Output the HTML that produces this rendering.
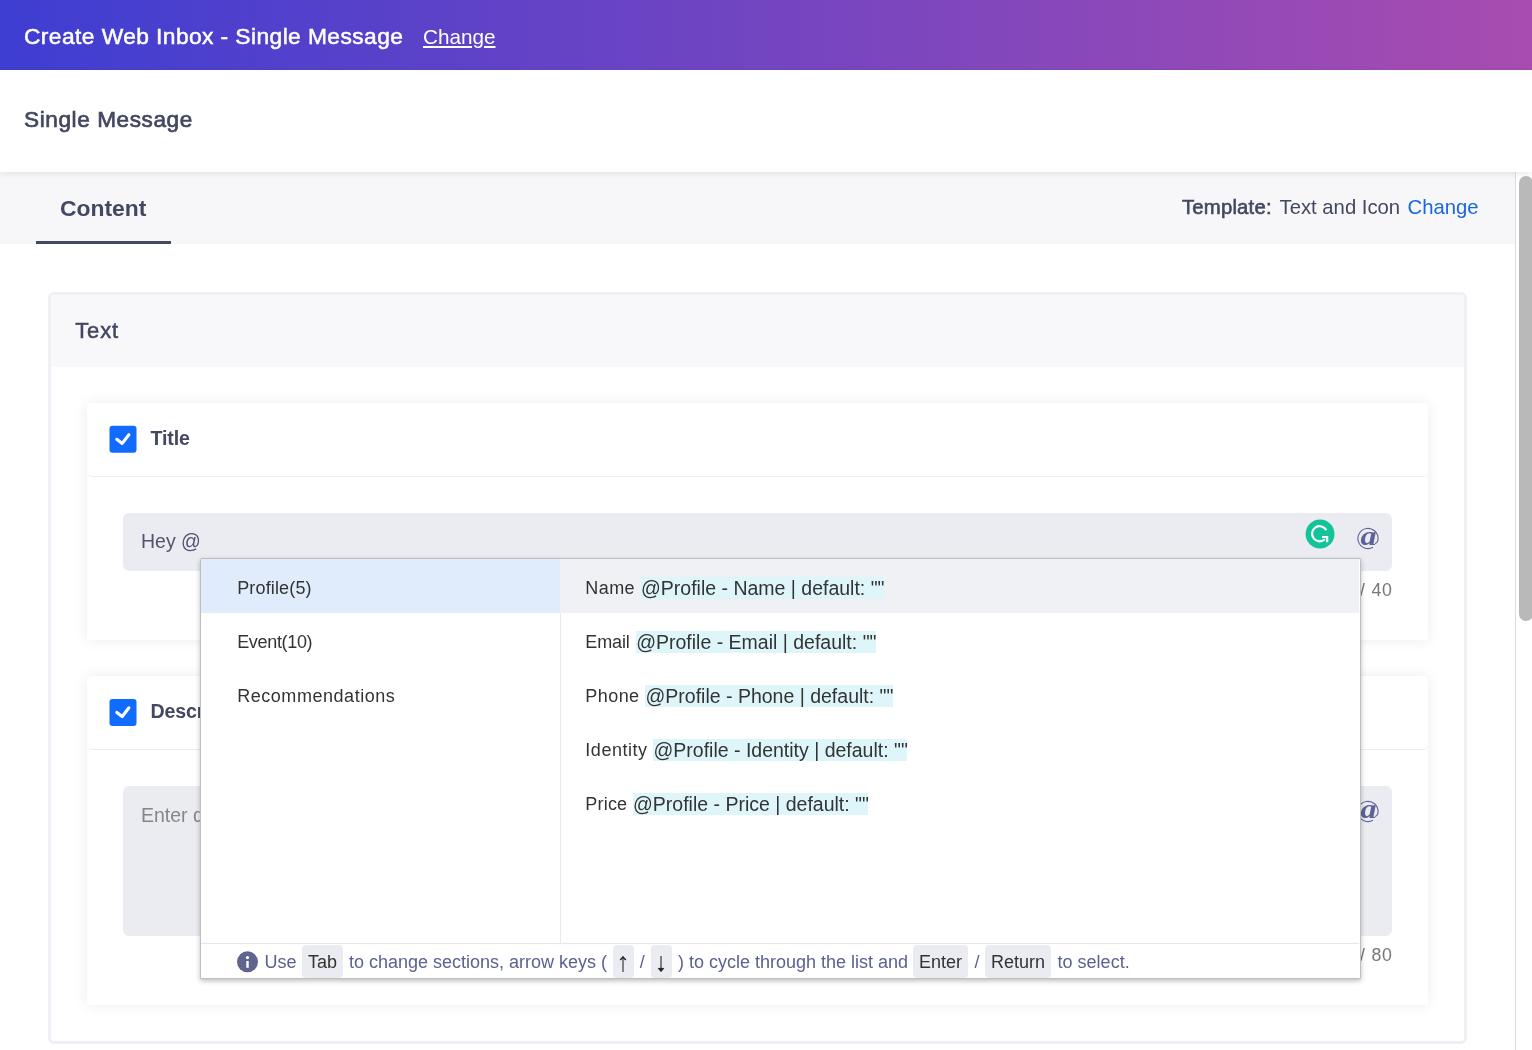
<!DOCTYPE html>
<html>
<head>
<meta charset="utf-8">
<style>
*{box-sizing:border-box;margin:0;padding:0}
html,body{width:1532px;height:1050px;overflow:hidden;background:#fff}
body{font-family:"Liberation Sans",sans-serif;color:#434761;position:relative}
.abs{position:absolute}
.t{position:absolute;white-space:nowrap;line-height:1}
.med{-webkit-text-stroke:0.5px currentColor}
#hdr{left:0;top:0;width:1532px;height:70px;background:linear-gradient(90deg,#3e3ed2 0%,#a84cb0 100%)}
#sub{left:0;top:70px;width:1532px;height:102px;background:#fff;box-shadow:0 2px 6px rgba(0,0,0,0.085);z-index:3}
#tabs{left:0;top:172px;width:1515px;height:72px;background:#f7f7fa}
#tabline{left:36px;top:241px;width:135px;height:3px;background:#434761}
#sbline{left:1515px;top:172px;width:1px;height:878px;background:#dcdcdc}
#sbthumb{left:1519px;top:176px;width:14px;height:445px;background:#b9b9b9;border-radius:7px}
#card{left:48px;top:292px;width:1419px;height:752px;border:3px solid #eff0f5;border-radius:6px;background:#fff}
#cardhdr{left:51px;top:295px;width:1413px;height:72px;background:#f8f8fa}
.sec{background:#fff;box-shadow:0 0 14px rgba(40,40,80,0.085);border-radius:5px 5px 0 0}
.sechdr{background:#fff;border-bottom:1px solid #ececf2;border-radius:5px}
.cb{width:27px;height:27px;background:#126bff;border-radius:3px}
.inp{background:#ebecf2;border-radius:6px}
#dd{left:200px;top:558px;width:1161px;height:421px;background:#fff;border:1px solid #bebebe;border-radius:2px 2px 0 0;box-shadow:0 2px 5px rgba(0,0,0,0.26);z-index:10}
.hl{background:#def6fa}
.key{position:absolute;background:#ebecf2;border-radius:4px;height:35px;top:0}
</style>
</head>
<body>
<div id="root" style="position:absolute;left:0;top:0;width:1532px;height:1050px;will-change:transform;overflow:hidden">
<div class="abs" id="hdr"></div>
<div class="abs" id="sub"></div>
<div class="t med" style="left:24px;top:25.2px;font-size:22.8px;letter-spacing:.41px;color:#fff;z-index:4">Create Web Inbox - Single Message</div>
<div class="t" style="left:423px;top:27px;font-size:20.7px;color:#fff;text-decoration:underline;z-index:4">Change</div>
<div class="t med" style="left:24px;top:109.4px;font-size:22.6px;letter-spacing:.58px;-webkit-text-stroke-width:.7px;color:#434761;z-index:4">Single Message</div>

<div class="abs" id="tabs"></div>
<div class="abs" id="tabline"></div>
<div class="t" style="left:60px;top:197px;font-size:22.9px;font-weight:bold;color:#434761">Content</div>
<div class="t med" style="left:1182px;top:197px;font-size:20.3px;color:#434761;-webkit-text-stroke-width:.6px;letter-spacing:.2px">Template:</div>
<div class="t" style="left:1279.5px;top:197px;font-size:20.3px;color:#434761">Text and Icon</div>
<div class="t" style="left:1407.5px;top:197px;font-size:20.3px;color:#1a66e0">Change</div>
<div class="abs" id="sbline"></div>
<div class="abs" id="sbthumb"></div>

<div class="abs" id="card"></div>
<div class="abs" id="cardhdr"></div>
<div class="t med" style="left:75.3px;top:320.3px;font-size:22px;letter-spacing:.8px">Text</div>

<!-- Title section -->
<div class="abs sec" style="left:87px;top:403px;width:1341px;height:237px"></div>
<div class="abs sechdr" style="left:87px;top:403px;width:1341px;height:74px"></div>
<div class="abs cb" style="left:109px;top:425px;transform:translate(.5px,.8px);height:27.4px"><svg width="27" height="27" viewBox="0 0 27 27"><path d="M7.3 13.5 L12.7 17.6 L19.4 8.9" fill="none" stroke="#fff" stroke-width="3.1" stroke-linecap="round" stroke-linejoin="round"/></svg></div>
<div class="t" style="left:150.4px;top:428.8px;font-size:19.6px;font-weight:bold;letter-spacing:-.1px">Title</div>
<div class="abs inp" style="left:123px;top:513px;width:1269px;height:58px"></div>
<div class="t" style="left:141px;top:532px;font-size:19.5px;color:#50546f">Hey @</div>
<div class="abs" style="left:1305px;top:519px;width:30px;height:30px"><svg width="30" height="30" viewBox="0 0 30 30"><circle cx="15.05" cy="15" r="14.45" fill="#15c39a"/><path d="M21.4 11.2 A7.6 7.6 0 1 0 19.9 20.3" fill="none" stroke="#fff" stroke-width="2.1"/><path d="M17 18 H22.2 V23.2" fill="none" stroke="#fff" stroke-width="2.1"/></svg></div>
<div class="abs" style="left:1356px;top:526.5px;width:26px;height:26px"><svg width="26" height="26" viewBox="0 0 26 26"><text transform="translate(4.4 17.9) scale(1.17 1)" font-family="Liberation Serif" font-style="italic" font-weight="bold" font-size="27.5" fill="#5e6397">a</text><path d="M19 16.6 C21 15.8 22.1 13.6 22.1 11.5 A10.1 10.1 0 1 0 17 20.27" fill="none" stroke="#5e6397" stroke-width="1.1"/></svg></div>
<div class="t" style="right:139.2px;top:582px;font-size:17.8px;letter-spacing:.8px;color:#777">0 / 40</div>

<!-- Description section -->
<div class="abs sec" style="left:87px;top:676px;width:1341px;height:329px"></div>
<div class="abs sechdr" style="left:87px;top:676px;width:1341px;height:74px"></div>
<div class="abs cb" style="left:109px;top:698px;transform:translate(.5px,.9px);height:27.4px"><svg width="27" height="27" viewBox="0 0 27 27"><path d="M7.3 13.5 L12.7 17.6 L19.4 8.9" fill="none" stroke="#fff" stroke-width="3.1" stroke-linecap="round" stroke-linejoin="round"/></svg></div>
<div class="t" style="left:150.4px;top:701.8px;font-size:19.6px;font-weight:bold;letter-spacing:-.1px">Description</div>
<div class="abs inp" style="left:123px;top:786px;width:1269px;height:150px"></div>
<div class="t" style="left:141px;top:805.5px;font-size:19.5px;color:#868686">Enter description</div>
<div class="abs" style="left:1356px;top:799.5px;width:26px;height:26px"><svg width="26" height="26" viewBox="0 0 26 26"><text transform="translate(4.4 17.9) scale(1.17 1)" font-family="Liberation Serif" font-style="italic" font-weight="bold" font-size="27.5" fill="#5e6397">a</text><path d="M19 16.6 C21 15.8 22.1 13.6 22.1 11.5 A10.1 10.1 0 1 0 17 20.27" fill="none" stroke="#5e6397" stroke-width="1.1"/></svg></div>
<div class="t" style="right:139.2px;top:947px;font-size:17.8px;letter-spacing:.8px;color:#777">0 / 80</div>

<!-- Dropdown -->
<div class="abs" id="dd">
  <div class="abs" style="left:0;top:0;width:359px;height:54px;background:#e0ecfc"></div>
  <div class="abs" style="left:359px;top:0;width:799px;height:54px;background:#f0f1f5"></div>
  <div class="abs" style="left:359px;top:54px;width:1px;height:330px;background:#e8e8f0"></div>
  <div class="abs" style="left:0;top:384px;width:1158px;height:1px;background:#e6e6ec"></div>
  <div class="t" style="left:36.2px;top:20.0px;font-size:18.0px;color:#333;letter-spacing:0.15px;">Profile(5)</div>
  <div class="t" style="left:36.2px;top:74.0px;font-size:18.0px;color:#333;letter-spacing:-0.33px;">Event(10)</div>
  <div class="t" style="left:36.2px;top:128.0px;font-size:18.0px;color:#333;letter-spacing:0.54px;">Recommendations</div>
  <div class="t" style="left:384.3px;top:20.0px;font-size:18.0px;color:#333;letter-spacing:0.43px;">Name</div>
  <div class="t hl" style="left:440px;top:18px;width:243px;font-size:19.5px;line-height:22px;height:22px;color:#333;text-indent:0.0px">@Profile - Name | default: ""</div>
  <div class="t" style="left:384.3px;top:74.0px;font-size:18.0px;color:#333;letter-spacing:-0.13px;">Email</div>
  <div class="t hl" style="left:435px;top:72px;width:240px;font-size:19.5px;line-height:22px;height:22px;color:#333;text-indent:0.2px">@Profile - Email | default: ""</div>
  <div class="t" style="left:384.3px;top:128.0px;font-size:18.0px;color:#333;letter-spacing:0.44px;">Phone</div>
  <div class="t hl" style="left:444px;top:126px;width:248px;font-size:19.5px;line-height:22px;height:22px;color:#333;text-indent:0.5px">@Profile - Phone | default: ""</div>
  <div class="t" style="left:384.3px;top:182.0px;font-size:18.0px;color:#333;letter-spacing:0.54px;">Identity</div>
  <div class="t hl" style="left:452px;top:180px;width:254px;font-size:19.5px;line-height:22px;height:22px;color:#333;text-indent:0.5px">@Profile - Identity | default: ""</div>
  <div class="t" style="left:384.3px;top:236.0px;font-size:18.0px;color:#333;letter-spacing:0.20px;">Price</div>
  <div class="t hl" style="left:432px;top:234px;width:235px;font-size:19.5px;line-height:22px;height:22px;color:#333;text-indent:0.0px">@Profile - Price | default: ""</div>
  <div class="abs" style="left:36px;top:392px;width:21px;height:21px;border-radius:50%;transform:translateY(.3px);background:#60658f"><svg width="21" height="21" viewBox="0 0 21 21"><rect x="9.3" y="9.7" width="2.4" height="6.8" fill="#fff"/><circle cx="10.5" cy="6.3" r="1.6" fill="#fff"/></svg></div>
  <div class="t" style="left:63.5px;top:394.0px;font-size:18px;color:#5c6191;">Use</div>
  <div class="abs key" style="left:101.0px;top:386px;width:40.8px;height:32.5px;line-height:34px;text-align:center;font-size:18px;color:#333">Tab</div>
  <div class="t" style="left:148.0px;top:394.0px;font-size:18px;color:#5c6191;">to change sections, arrow keys (</div>
  <div class="abs key" style="left:412.2px;top:386px;width:20.8px;height:32.5px;line-height:34px;text-align:center;font-size:18px;color:#333"><svg width="21" height="32" viewBox="0 0 21 32" style="display:block"><path d="M10 11.6 V27" stroke="#808080" stroke-width="2" fill="none"/><path d="M7.2 14.9 L10 12 L12.8 14.9" stroke="#222" stroke-width="1.5" fill="none"/></svg></div>
  <div class="t" style="left:438.8px;top:394.0px;font-size:18px;color:#5c6191;">/</div>
  <div class="abs key" style="left:450.2px;top:386px;width:20.7px;height:32.5px;line-height:34px;text-align:center;font-size:18px;color:#333"><svg width="21" height="32" viewBox="0 0 21 32" style="display:block"><path d="M10 11 V26" stroke="#808080" stroke-width="2" fill="none"/><path d="M7.3 23.4 L10 26.5 L12.7 23.4 Z" stroke="#222" stroke-width="1" fill="#222"/></svg></div>
  <div class="t" style="left:477.0px;top:394.0px;font-size:18px;color:#5c6191;">) to cycle through the list and</div>
  <div class="abs key" style="left:712.0px;top:386px;width:54.9px;height:32.5px;line-height:34px;text-align:center;font-size:18px;color:#333">Enter</div>
  <div class="t" style="left:773.5px;top:394.0px;font-size:18px;color:#5c6191;">/</div>
  <div class="abs key" style="left:784.2px;top:386px;width:65.8px;height:32.5px;line-height:34px;text-align:center;font-size:18px;color:#333">Return</div>
  <div class="t" style="left:856.6px;top:394.0px;font-size:18px;color:#5c6191;">to select.</div>
</div>
</div>
</body>
</html>
